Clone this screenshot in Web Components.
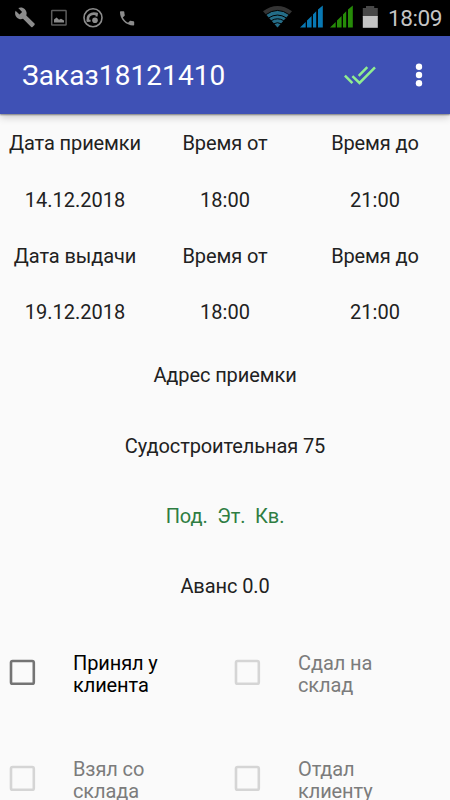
<!DOCTYPE html>
<html lang="ru">
<head>
<meta charset="utf-8">
<title>Заказ18121410</title>
<style>
html,body{margin:0;height:100%;overflow:hidden}
body{background:#fafafa;font-family:Roboto,"Noto Sans",sans-serif;font-size:20px;line-height:22.5px;color:#212121}
</style>
</head>
<body>
<order-screen></order-screen>
<script>
const define = (name, html) => customElements.define(name, class extends HTMLElement {
  constructor() {
    super();
    const t = document.createElement('template');
    t.innerHTML = html;
    this.attachShadow({mode: 'open'}).append(t.content.cloneNode(true));
  }
});

define('status-bar', `
<style>
:host{display:flex;height:36px;box-sizing:border-box;background:#000;justify-content:space-between;color:#c4c4c4}
svg{display:block;flex:none}
.clock{font-size:22.6px;line-height:36px;letter-spacing:-.45px;padding:1px 8px 0 6px;white-space:nowrap}
</style>
<svg width="150" height="36" viewBox="0 0 150 36">
  <path fill="#8c8c8c" d="M34.5 23.6 26.3 15.4C27.1 13.3 26.6 10.9 24.9 9.2 23.1 7.4 20.4 7.1 18.3 8.1L22.1 11.9 19.5 14.6 15.6 10.8C14.6 12.9 15 15.7 16.8 17.4 18.5 19.1 20.9 19.6 23 18.8L31.2 27C31.6 27.4 32.2 27.4 32.5 27L34.5 24.9C34.9 24.5 34.9 23.9 34.5 23.6Z"/>
  <rect x="51.7" y="10.6" width="14.4" height="14.4" rx=".6" fill="none" stroke="#5c5c5c" stroke-width="1.5"/>
  <path fill="#8c8c8c" d="M54 22.6V19.6L56.6 17.4 59 19.8 61 18.7 64 20.4V22.6Z"/>
  <circle cx="93" cy="17.7" r="9" fill="none" stroke="#8c8c8c" stroke-width="1.6"/>
  <path fill="none" stroke="#8c8c8c" stroke-width="2.6" d="M88.4 21.6C86.4 16.2 91 12 97.6 14.4"/>
  <path fill="none" stroke="#8c8c8c" stroke-width="2" d="M86.6 20.8H90.6M96.6 12.8V16.4"/>
  <circle cx="95" cy="20.2" r="2.8" fill="#8c8c8c"/>
  <path fill="#8c8c8c" transform="translate(117.6 8.9) scale(.79)" d="M6.62 10.79c1.44 2.83 3.76 5.14 6.59 6.59l2.2-2.2c.27-.27.67-.36 1.02-.24 1.12.37 2.33.57 3.57.57.55 0 1 .45 1 1V20c0 .55-.45 1-1 1-9.39 0-17-7.61-17-17 0-.55.45-1 1-1h3.5c.55 0 1 .45 1 1 0 1.25.2 2.45.57 3.57.11.35.03.74-.25 1.02l-2.2 2.2z"/>
</svg>
<svg width="121" height="36" viewBox="262 0 121 36" style="margin-left:auto">
  <path fill="#343434" d="M264 11.2Q278.5.6 293 11.2L278.5 27.2Z"/>
  <path fill="#246d88" d="M267.3 14.4Q278.5 6.7 289.7 14.4L278.5 27.4Z"/>
  <path fill="none" stroke="#000" stroke-width="1" d="M266.8 14.7Q278.5 6.2 290.2 14.7M269.6 17.9Q278.5 12.2 287.4 17.9M272.2 20.7Q278.5 16.9 284.8 20.7M274.8 23.8Q278.5 21.6 282.2 23.8"/>
  <path fill="#0878b3" d="M301 27.5 306.7 22V27.5ZM308 27.5V20.4L312.6 16V27.5ZM314 27.5V14.5L317.2 11.2V27.5ZM319 27.5V9.4L323.8 5.4V27.5Z"/>
  <path fill="#268b08" d="M331 27.5 336.7 22V27.5ZM338 27.5V20.4L342.6 16V27.5ZM344 27.5V14.5L347.2 11.2V27.5ZM349 27.5V9.4L353.8 5.4V27.5Z"/>
  <path fill="#484848" d="M367 6H375.2V8H378.8V17H363.8V8H367Z"/>
  <path fill="#c4c4c4" d="M363.8 16H378.8V27.8H363.8Z"/>
</svg>
<span class="clock">18:09</span>`);

define('app-bar', `
<style>
:host{display:flex;height:78.4px;align-items:center;background:#3f51b5;color:#fff;padding-left:22px;box-sizing:border-box;box-shadow:0 1px 1.5px rgba(0,0,0,.4),0 3px 8px rgba(0,0,0,.2);flex:none;position:relative}
h1{margin:0;padding-top:2px;font-size:28px;letter-spacing:.08px;font-weight:400;line-height:34px;flex:1;white-space:nowrap}
svg{display:block;flex:none}
</style>
<h1><slot></slot></h1>
<svg width="110" height="78" viewBox="340 36 110 78">
  <g fill="none" stroke="#90ee90" stroke-width="2.5">
    <path d="M344.9 75.6 352.4 83.2M352.4 76.1 359.5 83 375 67.3M358.7 75.8 367.3 67.2"/>
  </g>
  <g fill="#fff"><circle cx="419" cy="66.7" r="3.2"/><circle cx="419" cy="75" r="3.2"/><circle cx="419" cy="83.2" r="3.2"/></g>
</svg>`);

define('schedule-grid', `
<style>
:host{display:grid;grid-template-columns:repeat(3,1fr);grid-auto-rows:56.25px;align-items:center;text-align:center;white-space:nowrap;flex:none}
</style><slot></slot>`);

define('info-line', `
<style>
:host{display:flex;height:70.3px;flex:none;align-items:center;justify-content:center;white-space:pre;letter-spacing:-.1px}
</style><span><slot></slot></span>`);

define('stage-list', `
<style>
:host{display:grid;grid-template-columns:1fr 1fr;grid-auto-rows:105.8px;flex:none}
</style><slot></slot>`);

define('stage-check', `
<style>
:host{display:flex;align-items:center;padding-left:9px;color:#7c7c7c;--box:#d5d5d5;letter-spacing:-.1px}
:host([enabled]){color:#000;--box:#747474}
svg{display:block;margin:0 37px 4px 0;flex:none}
span{width:110px}
</style><svg width="27" height="27"><rect x="2" y="2" width="22.8" height="22.8" rx="1.6" fill="none" stroke="var(--box)" stroke-width="2.6"/></svg><span><slot></slot></span>`);

define('order-screen', `
<style>
:host{display:flex;flex-direction:column;height:800px;overflow:hidden}
status-bar{flex:none}
.label{letter-spacing:-.1px}
.green{color:#2e7d42}
main{display:flex;flex-direction:column;padding-top:1px}
</style>
<status-bar></status-bar>
<app-bar>Заказ18121410</app-bar>
<main>
<schedule-grid>
<span class="label">Дата приемки</span><span class="label">Время от</span><span class="label">Время до</span>
<span>14.12.2018</span><span>18:00</span><span>21:00</span>
<span class="label">Дата выдачи</span><span class="label">Время от</span><span class="label">Время до</span>
<span>19.12.2018</span><span>18:00</span><span>21:00</span>
</schedule-grid>
<info-line>Адрес приемки</info-line>
<info-line>Судостроительная 75</info-line>
<info-line class="green">Под.  Эт.  Кв.</info-line>
<info-line>Аванс 0.0</info-line>
<stage-list>
<stage-check enabled>Принял у<br>клиента</stage-check>
<stage-check>Сдал на<br>склад</stage-check>
<stage-check>Взял со<br>склада</stage-check>
<stage-check>Отдал<br>клиенту</stage-check>
</stage-list>
</main>`);
</script>
</body>
</html>
